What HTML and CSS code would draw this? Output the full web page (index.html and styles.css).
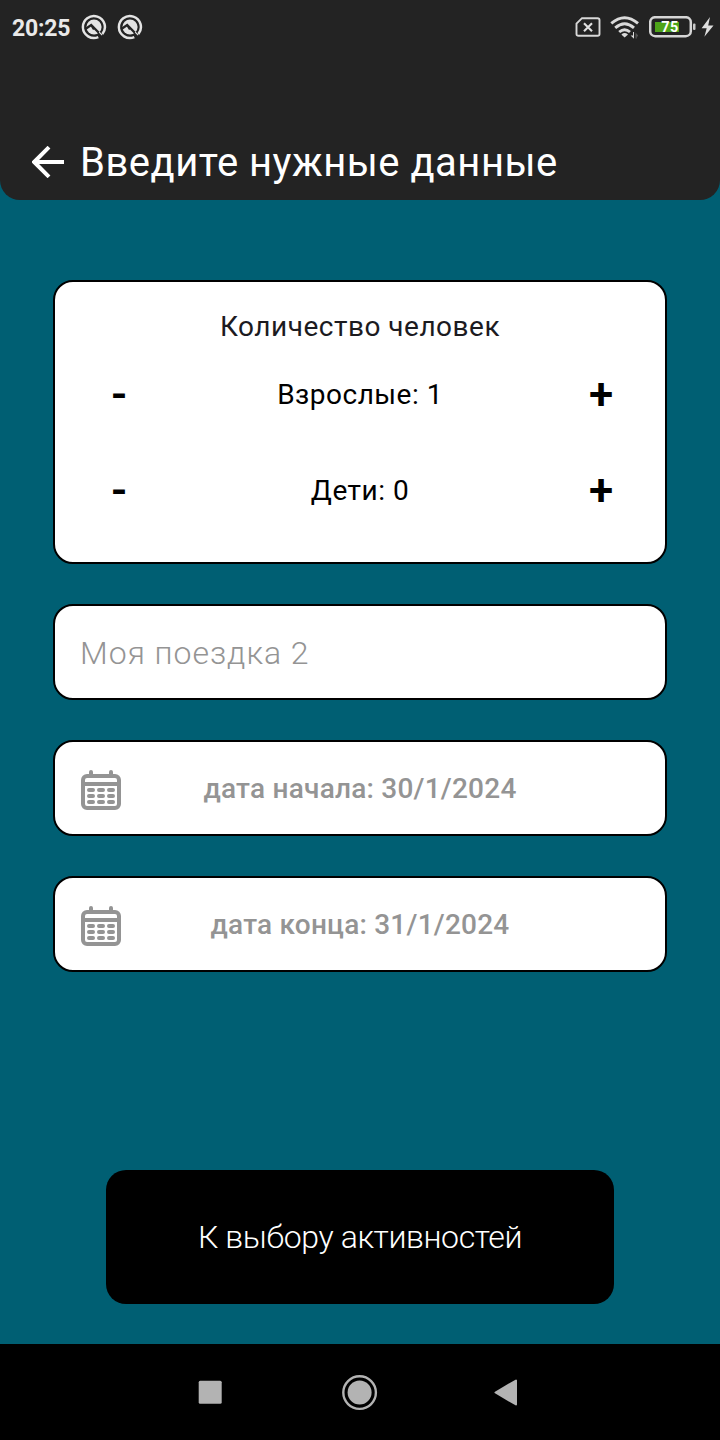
FILE: index.html
```html
<!DOCTYPE html>
<html lang="ru">
<head>
<meta charset="utf-8">
<title>Введите нужные данные</title>
<link rel="stylesheet" href="styles.css">
</head>
<body>
<svg class="defs" width="0" height="0">
  <symbol id="notice" viewBox="0 0 26 26">
    <path d="M17.3 23.1A11 11 0 1 1 21.4 20" fill="none" stroke="#e4e4e4" stroke-width="2.5"/>
    <circle cx="13" cy="13" r="7.6" fill="#e4e4e4"/>
    <path d="M4 15.2L10.2 11L21.5 22.5M10.5 11.5L13 15.5" fill="none" stroke="#232323" stroke-width="2.3"/>
    <path d="M18.2 18.2L21.2 21.2" stroke="#e4e4e4" stroke-width="1.2"/>
  </symbol>
  <symbol id="calendar" viewBox="0 0 40 40">
    <rect x="2" y="6" width="36" height="32" rx="4" fill="none" stroke="#949494" stroke-width="4"/>
    <path d="M2 14H38" stroke="#949494" stroke-width="4"/>
    <path d="M10 2V6M30 2V6M8 20H12M18 20H22M28 20H32M8 26H12M18 26H22M28 26H32M8 32H12M18 32H22M28 32H32" stroke="#949494" stroke-width="4" stroke-linecap="round"/>
  </symbol>
</svg>
<div class="screen">
  <header class="header">
    <div class="status">
      <span class="clock">20:25</span>
      <svg class="notice" width="26" height="26"><use href="#notice"/></svg>
      <svg class="notice" width="26" height="26"><use href="#notice"/></svg>
      <svg class="sim" width="26" height="20" viewBox="0 0 26 20">
        <path d="M7 1.2H22.5Q24.5 1.2 24.5 3V17Q24.5 18.8 22.5 18.8H3.5Q1.5 18.8 1.5 17V6.7Z" fill="none" stroke="#d8d8d8" stroke-width="1.9"/>
        <path d="M9 6.3L17 14.3M17 6.3L9 14.3" stroke="#e0e0e0" stroke-width="2.1"/>
      </svg>
      <svg class="wifi" width="30" height="24" viewBox="0 0 30 24">
        <path d="M1.3 7.3Q14.6-4 28 7.3M5.2 11.9Q14.6 3.7 24 11.9M9.2 16Q14.6 11.4 20 16" fill="none" stroke="#dadada" stroke-width="2.9"/>
        <path d="M11.6 18.2Q14.6 15.8 17.8 18.2V18.8L14.6 21.6L11.6 18.8Z" fill="#dadada"/>
        <path d="M24 16V22.8L20.6 19.6H23V16Z" fill="#dadada"/>
        <path d="M25.5 22.5V16.5L28 19.2V20.5H26.8V22.5Z" fill="#555"/>
      </svg>
      <svg class="battery" width="47" height="22" viewBox="0 0 47 22">
        <rect x="1.2" y="1.2" width="40.6" height="19" rx="5" fill="none" stroke="#d5d5d5" stroke-width="2.5"/>
        <rect x="6" y="6" width="24" height="10" fill="#4ea419"/>
        <rect x="44" y="7.5" width="2.5" height="6.5" rx="1" fill="#c8c8c8"/>
        <text class="charge" x="21" y="16" text-anchor="middle">75</text>
      </svg>
      <svg class="bolt" width="13" height="20" viewBox="0 0 13 20">
        <path d="M9 0L.6 11.2H5.7L3.4 19.8 12.5 8.4H7.2Z" fill="#dedede"/>
      </svg>
    </div>
    <div class="title-bar">
      <svg class="back" width="32" height="32" viewBox="0 0 32 32"><path d="M32 16H3M17 1.2L2.2 16 17 30.8" fill="none" stroke="#fff" stroke-width="4"/></svg>
      <h1 class="title">Введите нужные данные</h1>
    </div>
  </header>
  <main class="form">
    <section class="card people">
      <h2 class="people-title">Количество человек</h2>
      <div class="counter"><button class="step minus">-</button><span>Взрослые: 1</span><button class="step">+</button></div>
      <div class="counter"><button class="step minus">-</button><span>Дети: 0</span><button class="step">+</button></div>
    </section>
    <div class="card field trip">Моя поездка 2</div>
    <div class="card field date"><svg class="calendar" width="40" height="40"><use href="#calendar"/></svg><span class="date-text">дата начала: 30/1/2024</span></div>
    <div class="card field date"><svg class="calendar" width="40" height="40"><use href="#calendar"/></svg><span class="date-text">дата конца: 31/1/2024</span></div>
    <button class="submit">К выбору активностей</button>
  </main>
  <nav class="nav">
    <svg width="24" height="24"><rect x=".7" y=".7" width="23" height="23" rx="1.5" fill="#b3b3b3"/></svg>
    <svg class="home" width="36" height="36" viewBox="0 0 36 36"><circle cx="17.6" cy="17.6" r="16.3" fill="none" stroke="#b3b3b3" stroke-width="2.4"/><circle cx="17.6" cy="17.6" r="12" fill="#b3b3b3"/></svg>
    <svg width="24" height="27" viewBox="0 0 24 27"><path d="M1.5 13.5L22 1.5V25.5Z" fill="#b3b3b3" stroke="#b3b3b3" stroke-width="2" stroke-linejoin="round"/></svg>
  </nav>
</div>
</body>
</html>
```
FILE: styles.css
```css
* { box-sizing: border-box; }
body { margin: 0; background: #005f73; font-family: Roboto, "Noto Sans", sans-serif; }
button { border: 0; padding: 0; background: none; font-family: inherit; }
svg { display: block; flex: none; }
.defs { position: absolute; }
.screen { width: 720px; height: 1440px; display: flex; flex-direction: column; background: #005f73; }
.header { height: 200px; background: #232323; border-radius: 0 0 20px 20px; }
.status { height: 54px; padding: 0 6px 0 12px; display: flex; align-items: center; }
.clock { width: 69px; font-size: 23px; font-weight: 700; line-height: 28px; padding-top: 3px; letter-spacing: -0.2px; color: #e9e9e9; }
.notice { margin-right: 10px; }
.sim { margin-left: auto; margin-right: 9px; }
.wifi { margin-right: 9px; margin-top: 2px; }
.battery { margin-right: 5px; }
.charge { font-size: 14.5px; font-weight: 700; fill: #fff; letter-spacing: 0.5px; }
.title-bar { height: 146px; padding: 70px 32px 0; display: flex; align-items: center; gap: 16px; }
.title { margin: 0; padding-top: 2px; font-size: 40px; font-weight: 400; line-height: 48px; letter-spacing: 0.5px; color: #fff; white-space: nowrap; }
.form { height: 1144px; padding: 80px 53px 40px; display: flex; flex-direction: column; gap: 40px; }
.card { flex: none; background: #fff; border: 2px solid #000; border-radius: 20px; }
.people { height: 284px; padding: 25px 16px 0; }
.people-title { margin: 0; font-size: 28px; font-weight: 400; line-height: 40px; height: 39px; letter-spacing: 0.5px; text-align: center; color: #1c1b1f; }
.counter { height: 96px; display: grid; grid-template-columns: 96px 1fr 96px; align-items: center; text-align: center; font-size: 28px; letter-spacing: 0.5px; color: #000; }
.step { height: 96px; padding-top: 1px; font-size: 44px; font-weight: 600; line-height: 95px; color: #000; }
.field { height: 96px; padding: 0 25px; display: flex; align-items: center; }
.trip { padding-top: 2px; font-size: 32px; font-weight: 300; letter-spacing: 0.95px; color: #949494; }
.date { display: grid; grid-template-columns: 40px 1fr 40px; padding-left: 26px; }
.calendar { margin-top: 4px; }
.date-text { margin-left: -1px; text-align: center; font-size: 28px; font-weight: 500; letter-spacing: 0.22px; color: #949494; white-space: nowrap; }
.submit { width: 508px; height: 134px; margin: auto auto 0; background: #000; border-radius: 20px; color: #fff; font-size: 32px; font-weight: 300; letter-spacing: -0.4px; }
.nav { height: 96px; background: #000; display: flex; align-items: center; justify-content: space-between; padding: 0 202px 0 198px; }
.home { margin: 2px 0 0 4px; }
```
